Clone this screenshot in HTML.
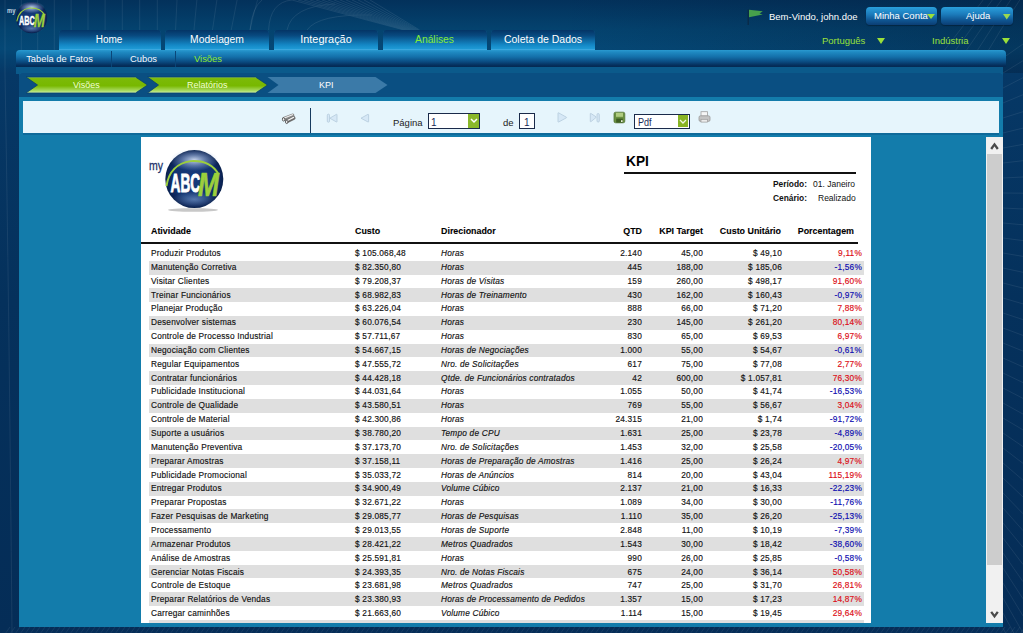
<!DOCTYPE html>
<html><head><meta charset="utf-8">
<style>
*{margin:0;padding:0;box-sizing:border-box}
html,body{width:1023px;height:633px;overflow:hidden}
body{position:relative;font-family:"Liberation Sans",sans-serif;background:linear-gradient(180deg,#03315b 0px,#04436f 30px,#054876 49px,#05406e 60px,#063866 73px,#05315c 300px,#052d57 633px)}
.abs{position:absolute}
/* top tabs */
.tab{position:absolute;top:30px;height:20px;border-radius:4px 4px 0 0;background:linear-gradient(180deg,#043465 0%,#084a80 28%,#1488c6 75%,#22a0da 100%);color:#fff;font-size:10.4px;text-align:center;line-height:19px;box-shadow:inset 0 -1px 0 #3aa8e0}
.tab span{position:relative}
.tab.act{color:#84ec36}
.subnav{position:absolute;left:16px;top:50px;width:990px;height:17px;border-radius:4px 4px 0 0;background:linear-gradient(180deg,#2a9ad0 0%,#1f8ac2 12%,#1470aa 40%,#0a4a80 70%,#052f5c 90%,#042a52 100%)}
.sub{position:absolute;top:49px;height:19px;color:#f4f8ff;font-size:9.4px;line-height:19px;text-align:center}
.sep{position:absolute;top:51px;width:1px;height:16px;background:#0a4678}
/* panel */
.panel{position:absolute;left:19px;top:73px;width:984px;height:554px;background:#137cab;border-radius:3px 3px 0 0}
.panel .topband{position:absolute;left:0;top:0;width:984px;height:24px;background:#0a4f82;border-radius:3px 3px 0 0}
.toolbar{position:absolute;left:23px;top:101px;width:976px;height:32px;background:#e6f5fc;box-shadow:0 2px 0 #0f6a9a}
.page{position:absolute;left:141px;top:137px;width:730px;height:486px;background:#fff;overflow:hidden;color:#111;font-size:8.3px}
.r{position:absolute;left:8px;width:715px;height:14px}
.r.g{background:#dfdfdf}
.tx{position:absolute;left:0;width:715px;height:10px}.r span{position:absolute;top:0;white-space:nowrap;line-height:10px;letter-spacing:0.2px;-webkit-text-stroke:0.15px}
.c1{left:2px}.c2{left:206px}.c3{left:292px;font-style:italic}
.c4{right:222px}.c5{right:161px}.c6{right:82px}.c7{right:2px}
.pos{color:#dc0c14}.neg{color:#0c0cb0}
.h{position:absolute;top:88.5px;font-weight:bold;font-size:8.9px;line-height:10px;white-space:nowrap;color:#000;-webkit-text-stroke:0.1px}
.sb{position:absolute;left:986px;top:137px;width:17px;height:486px;background:#f1f1f1}
.txt{position:absolute;white-space:nowrap}
</style></head><body>

<div class="abs" style="left:0;top:0;width:1023px;height:73px;background:linear-gradient(90deg,rgba(3,30,60,0) 0%,rgba(3,30,60,0) 55%,rgba(3,30,60,0.4) 100%)"></div>
<!-- decorative header lines -->
<svg class="abs" style="left:0;top:0" width="1023" height="633">
  <g stroke="#ffffff" stroke-width="0.8" fill="none" opacity="0.09">
    <path d="M5.0 0 Q5.0 35 5.0 73"/>
    <path d="M21.3 0 Q21.3 35 21.3 73"/>
    <path d="M37.7 0 Q37.7 35 37.7 73"/>
    <path d="M54.3 0 Q54.3 35 54.3 73"/>
    <path d="M71.1 0 Q71.1 35 71.1 73"/>
    <path d="M88.0 0 Q88.0 35 88.0 73"/>
    <path d="M105.1 0 Q105.1 35 105.1 73"/>
    <path d="M122.3 0 Q122.3 35 122.3 73"/>
    <path d="M139.7 0 Q139.7 35 139.7 73"/>
    <path d="M157.3 0 Q157.3 35 157.3 73"/>
    <path d="M177.0 0 Q175.0 35 174.0 73"/>
    <path d="M196.9 0 Q192.9 35 190.9 73"/>
    <path d="M216.9 0 Q210.9 35 207.9 73"/>
    <path d="M237.1 0 Q229.1 35 225.1 73"/>
    <path d="M257.5 0 Q247.5 35 242.5 73"/>
    <path d="M5 73 Q9 300 12 633"/>
    <path d="M10 627 L5 634"/>
    <path d="M15 627 L10 634"/>
    <path d="M20 627 L15 634"/>
    <path d="M25 627 L20 634"/>
    <path d="M30 627 L25 634"/>
    <path d="M35 627 L30 634"/>
    <path d="M40 627 L35 634"/>
    <path d="M45 627 L40 634"/>
    <path d="M50 627 L45 634"/>
    <path d="M55 627 L50 634"/>
    <path d="M60 627 L55 634"/>
    <path d="M65 627 L60 634"/>
    <path d="M70 627 L65 634"/>
    <path d="M75 627 L70 634"/>
    <path d="M80 627 L75 634"/>
    <path d="M85 627 L80 634"/>
    <path d="M90 627 L85 634"/>
    <path d="M95 627 L90 634"/>
    <path d="M100 627 L95 634"/>
    <path d="M105 627 L100 634"/>
    <path d="M110 627 L105 634"/>
    <path d="M115 627 L110 634"/>
    <path d="M120 627 L115 634"/>
    <path d="M125 627 L120 634"/>
    <path d="M130 627 L125 634"/>
    <path d="M135 627 L130 634"/>
    <path d="M140 627 L135 634"/>
    <path d="M145 627 L140 634"/>
    <path d="M150 627 L145 634"/>
    <path d="M155 627 L150 634"/>
    <path d="M160 627 L155 634"/>
    <path d="M165 627 L160 634"/>
    <path d="M170 627 L165 634"/>
    <path d="M175 627 L170 634"/>
    <path d="M180 627 L175 634"/>
    <path d="M185 627 L180 634"/>
    <path d="M190 627 L185 634"/>
    <path d="M195 627 L190 634"/>
    <path d="M200 627 L195 634"/>
    <path d="M205 627 L200 634"/>
    <path d="M210 627 L205 634"/>
    <path d="M215 627 L210 634"/>
    <path d="M220 627 L215 634"/>
    <path d="M225 627 L220 634"/>
    <path d="M230 627 L225 634"/>
    <path d="M235 627 L230 634"/>
    <path d="M240 627 L235 634"/>
    <path d="M245 627 L240 634"/>
    <path d="M250 627 L245 634"/>
    <path d="M255 627 L250 634"/>
    <path d="M260 627 L255 634"/>
    <path d="M265 627 L260 634"/>
    <path d="M270 627 L265 634"/>
    <path d="M275 627 L270 634"/>
    <path d="M280 627 L275 634"/>
    <path d="M285 627 L280 634"/>
    <path d="M290 627 L285 634"/>
    <path d="M295 627 L290 634"/>
    <path d="M300 627 L295 634"/>
    <path d="M305 627 L300 634"/>
    <path d="M310 627 L305 634"/>
    <path d="M315 627 L310 634"/>
    <path d="M320 627 L315 634"/>
    <path d="M325 627 L320 634"/>
    <path d="M330 627 L325 634"/>
    <path d="M335 627 L330 634"/>
    <path d="M340 627 L335 634"/>
    <path d="M345 627 L340 634"/>
    <path d="M350 627 L345 634"/>
    <path d="M355 627 L350 634"/>
    <path d="M360 627 L355 634"/>
    <path d="M365 627 L360 634"/>
    <path d="M370 627 L365 634"/>
    <path d="M375 627 L370 634"/>
    <path d="M380 627 L375 634"/>
    <path d="M385 627 L380 634"/>
    <path d="M390 627 L385 634"/>
    <path d="M395 627 L390 634"/>
    <path d="M400 627 L395 634"/>
    <path d="M405 627 L400 634"/>
    <path d="M410 627 L405 634"/>
    <path d="M415 627 L410 634"/>
    <path d="M420 627 L415 634"/>
    <path d="M425 627 L420 634"/>
    <path d="M430 627 L425 634"/>
    <path d="M435 627 L430 634"/>
    <path d="M440 627 L435 634"/>
    <path d="M445 627 L440 634"/>
    <path d="M450 627 L445 634"/>
    <path d="M455 627 L450 634"/>
    <path d="M460 627 L455 634"/>
    <path d="M465 627 L460 634"/>
    <path d="M470 627 L465 634"/>
    <path d="M475 627 L470 634"/>
    <path d="M480 627 L475 634"/>
    <path d="M485 627 L480 634"/>
    <path d="M490 627 L485 634"/>
    <path d="M495 627 L490 634"/>
    <path d="M500 627 L495 634"/>
    <path d="M505 627 L500 634"/>
    <path d="M510 627 L505 634"/>
    <path d="M515 627 L510 634"/>
    <path d="M520 627 L515 634"/>
    <path d="M525 627 L520 634"/>
    <path d="M530 627 L525 634"/>
    <path d="M535 627 L530 634"/>
    <path d="M540 627 L535 634"/>
    <path d="M545 627 L540 634"/>
    <path d="M550 627 L545 634"/>
    <path d="M555 627 L550 634"/>
    <path d="M560 627 L555 634"/>
    <path d="M565 627 L560 634"/>
    <path d="M570 627 L565 634"/>
    <path d="M575 627 L570 634"/>
    <path d="M580 627 L575 634"/>
    <path d="M585 627 L580 634"/>
    <path d="M590 627 L585 634"/>
    <path d="M595 627 L590 634"/>
    <path d="M600 627 L595 634"/>
    <path d="M605 627 L600 634"/>
    <path d="M610 627 L605 634"/>
    <path d="M615 627 L610 634"/>
    <path d="M620 627 L615 634"/>
    <path d="M625 627 L620 634"/>
    <path d="M630 627 L625 634"/>
    <path d="M635 627 L630 634"/>
    <path d="M640 627 L635 634"/>
    <path d="M645 627 L640 634"/>
    <path d="M650 627 L645 634"/>
    <path d="M655 627 L650 634"/>
    <path d="M660 627 L655 634"/>
    <path d="M665 627 L660 634"/>
    <path d="M670 627 L665 634"/>
    <path d="M675 627 L670 634"/>
    <path d="M680 627 L675 634"/>
    <path d="M685 627 L680 634"/>
    <path d="M690 627 L685 634"/>
    <path d="M695 627 L690 634"/>
    <path d="M700 627 L695 634"/>
    <path d="M705 627 L700 634"/>
    <path d="M710 627 L705 634"/>
    <path d="M715 627 L710 634"/>
    <path d="M720 627 L715 634"/>
    <path d="M725 627 L720 634"/>
    <path d="M730 627 L725 634"/>
    <path d="M735 627 L730 634"/>
    <path d="M740 627 L735 634"/>
    <path d="M745 627 L740 634"/>
    <path d="M750 627 L745 634"/>
    <path d="M755 627 L750 634"/>
    <path d="M760 627 L755 634"/>
    <path d="M765 627 L760 634"/>
    <path d="M770 627 L765 634"/>
    <path d="M775 627 L770 634"/>
    <path d="M780 627 L775 634"/>
    <path d="M785 627 L780 634"/>
    <path d="M790 627 L785 634"/>
    <path d="M795 627 L790 634"/>
    <path d="M800 627 L795 634"/>
    <path d="M805 627 L800 634"/>
    <path d="M810 627 L805 634"/>
    <path d="M815 627 L810 634"/>
    <path d="M820 627 L815 634"/>
    <path d="M825 627 L820 634"/>
    <path d="M830 627 L825 634"/>
    <path d="M835 627 L830 634"/>
    <path d="M840 627 L835 634"/>
    <path d="M845 627 L840 634"/>
    <path d="M850 627 L845 634"/>
    <path d="M855 627 L850 634"/>
    <path d="M860 627 L855 634"/>
    <path d="M865 627 L860 634"/>
    <path d="M870 627 L865 634"/>
    <path d="M875 627 L870 634"/>
    <path d="M880 627 L875 634"/>
    <path d="M885 627 L880 634"/>
    <path d="M890 627 L885 634"/>
    <path d="M895 627 L890 634"/>
    <path d="M900 627 L895 634"/>
    <path d="M905 627 L900 634"/>
    <path d="M910 627 L905 634"/>
    <path d="M915 627 L910 634"/>
    <path d="M920 627 L915 634"/>
    <path d="M925 627 L920 634"/>
    <path d="M930 627 L925 634"/>
    <path d="M935 627 L930 634"/>
    <path d="M940 627 L935 634"/>
    <path d="M945 627 L940 634"/>
    <path d="M950 627 L945 634"/>
    <path d="M955 627 L950 634"/>
    <path d="M960 627 L955 634"/>
    <path d="M965 627 L960 634"/>
    <path d="M970 627 L965 634"/>
    <path d="M975 627 L970 634"/>
    <path d="M980 627 L975 634"/>
    <path d="M985 627 L980 634"/>
    <path d="M990 627 L985 634"/>
    <path d="M995 627 L990 634"/>
    <path d="M1000 627 L995 634"/>
    <path d="M1005 627 L1000 634"/>
    <path d="M1010 627 L1005 634"/>
    <path d="M1015 627 L1010 634"/>
    <path d="M1020 627 L1015 634"/>
    <path d="M1025 627 L1020 634"/>
  </g>
  <g stroke="#ffffff" stroke-width="0.7" fill="none" opacity="0.12">
    <path d="M292 0 L404.0 30"/>
    <path d="M298 0 L405.2 30"/>
    <path d="M304 0 L406.4 30"/>
    <path d="M310 0 L407.6 30"/>
    <path d="M316 0 L408.8 30"/>
    <path d="M322 0 L410.0 30"/>
    <path d="M328 0 L411.2 30"/>
    <path d="M334 0 L412.4 30"/>
    <path d="M340 0 L413.6 30"/>
    <path d="M346 0 L414.8 30"/>
    <path d="M352 0 L416.0 30"/>
    <path d="M358 0 L417.2 30"/>
    <path d="M364 0 L418.4 30"/>
    <path d="M370 0 L419.6 30"/>
    <path d="M268.6 30 Q270 2 292 0"/>
    <path d="M287 30 Q292 6 335 4"/>
    <path d="M307 30 Q318 14 372 15"/>
    <path d="M250 30 Q252 8 262 0"/>
    <path d="M250 68 L251 73"/>
    <path d="M266 68 L267 73"/>
    <path d="M282 68 L283 73"/>
    <path d="M298 68 L299 73"/>
    <path d="M314 68 L315 73"/>
    <path d="M330 68 L331 73"/>
    <path d="M346 68 L347 73"/>
    <path d="M362 68 L363 73"/>
    <path d="M378 68 L379 73"/>
    <path d="M394 68 L395 73"/>
    <path d="M410 68 L411 73"/>
    <path d="M426 68 L427 73"/>
    <path d="M442 68 L443 73"/>
    <path d="M458 68 L459 73"/>
  </g>
  <g stroke="#ffffff" stroke-width="0.8" fill="none" opacity="0.09">
    <path d="M1003 58 L1023 44.0"/>
    <path d="M1003 73 L1023 60.7"/>
    <path d="M1003 88 L1023 77.7"/>
    <path d="M1003 103 L1023 94.7"/>
    <path d="M1003 118 L1023 111.7"/>
    <path d="M1003 133 L1023 128.1"/>
    <path d="M1003 148 L1023 144.4"/>
    <path d="M1003 163 L1023 160.7"/>
    <path d="M1003 178 L1023 177.0"/>
    <path d="M1003 193 L1023 193.2"/>
    <path d="M1003 208 L1023 209.0"/>
    <path d="M1003 223 L1023 224.8"/>
    <path d="M1003 238 L1023 240.6"/>
    <path d="M1003 253 L1023 256.4"/>
    <path d="M1003 268 L1023 272.3"/>
    <path d="M1003 283 L1023 288.1"/>
    <path d="M1003 298 L1023 303.9"/>
    <path d="M1003 313 L1023 319.6"/>
    <path d="M1003 328 L1023 335.4"/>
    <path d="M1003 343 L1023 351.1"/>
    <path d="M1003 358 L1023 366.9"/>
    <path d="M1003 373 L1023 382.6"/>
    <path d="M1003 388 L1023 398.4"/>
    <path d="M1003 403 L1023 414.1"/>
    <path d="M1003 418 L1023 429.9"/>
    <path d="M1003 433 L1023 446.6"/>
    <path d="M1003 448 L1023 463.4"/>
    <path d="M1003 463 L1023 480.2"/>
    <path d="M1003 478 L1023 497.0"/>
    <path d="M1003 493 L1023 513.8"/>
    <path d="M1003 508 L1023 530.6"/>
    <path d="M1003 523 L1023 547.4"/>
    <path d="M1003 538 L1023 564.5"/>
    <path d="M1003 553 L1023 581.7"/>
    <path d="M1003 568 L1023 598.8"/>
    <path d="M1003 583 L1023 615.9"/>
    <path d="M1003 598 L1023 633.0"/>
    <path d="M1003 613 L1023 650.2"/>
    <path d="M1003 628 L1023 667.3"/>
    <path d="M1023 -5 Q1000 30 975 73"/>
    <path d="M1014 -5 Q990 30 963 73"/>
    <path d="M1005 -5 Q980 30 951 73"/>
    <path d="M996 -5 Q970 30 939 73"/>
    <path d="M987 -5 Q960 30 927 73"/>
  </g>
</svg>

<!-- logo -->
<svg class="abs" style="left:0;top:0;width:0;height:0">
  <defs>
    <radialGradient id="gb" cx="0.5" cy="0.5" r="0.5">
      <stop offset="0" stop-color="#163a7c"/><stop offset="0.7" stop-color="#12346f"/><stop offset="0.92" stop-color="#0b2458"/><stop offset="1" stop-color="#08204c"/>
    </radialGradient>
    <radialGradient id="ghl" cx="0.5" cy="0.5" r="0.5">
      <stop offset="0" stop-color="#e8f0ff" stop-opacity="0.85"/><stop offset="0.5" stop-color="#b0c4e8" stop-opacity="0.45"/><stop offset="1" stop-color="#a0b8e0" stop-opacity="0"/>
    </radialGradient>
    <radialGradient id="gbl" cx="0.5" cy="0.5" r="0.5">
      <stop offset="0" stop-color="#8cacdc" stop-opacity="0.55"/><stop offset="1" stop-color="#8cacdc" stop-opacity="0"/>
    </radialGradient>
    <g id="logo">
      <circle cx="50" cy="50" r="50" fill="url(#gb)"/>
      <ellipse cx="50" cy="17" rx="42" ry="19" fill="url(#ghl)"/>
      <ellipse cx="50" cy="85" rx="38" ry="14" fill="url(#gbl)"/>
      <path d="M2 62 Q8 24 44 19 Q78 17 92 42" stroke="#9ccf3c" stroke-width="3.4" fill="none"/>
      <text x="9" y="73" font-family="Liberation Sans" font-size="43.5" font-weight="bold" fill="#fff" stroke="#fff" stroke-width="1.6" textLength="51" lengthAdjust="spacingAndGlyphs">ABC</text>
      <text x="56.5" y="79" font-family="Liberation Sans" font-size="57" font-weight="bold" font-style="italic" fill="#9ccf3c" stroke="#9ccf3c" stroke-width="1.2" textLength="36" lengthAdjust="spacingAndGlyphs">M</text>
    </g>
  </defs>
</svg>
<svg class="abs" style="left:0;top:0" width="60" height="40">
  <g transform="translate(16.2,2.2) scale(0.31)"><use href="#logo"/></g>
  <text x="7" y="12.5" font-family="Liberation Sans" font-size="7.2" font-weight="bold" fill="#c4d4e4" textLength="8.5" lengthAdjust="spacingAndGlyphs">my</text>
</svg>

<!-- top right -->
<svg class="abs" style="left:744px;top:6px" width="22" height="22">
  <path d="M4.2 3.5 L4.2 19" stroke="#0a2a48" stroke-width="1.4"/>
  <path d="M5 3.8 L18.8 5.3 L15.5 7.4 L18.8 8.6 L5 11.2 Z" fill="#47a04c"/>
</svg>
<div class="txt" style="left:769px;top:11px;font-size:9.5px;color:#fff;line-height:12px">Bem-Vindo, john.doe</div>
<div class="abs" style="left:866px;top:7px;width:71px;height:18px;border-radius:4px;background:linear-gradient(180deg,#2aa0dc 0%,#1c7cbc 40%,#0f5490 75%,#0b3e74 100%);box-shadow:0 1px 1px rgba(0,0,0,0.3)"></div>
<div class="txt" style="left:874px;top:10px;font-size:9.5px;color:#fff;line-height:12px">Minha Conta</div>
<svg class="abs" style="left:927px;top:14px" width="9" height="6"><path d="M0 0 L8 0 L4 5 Z" fill="#9ae03a"/></svg>
<div class="abs" style="left:941px;top:7px;width:72px;height:18px;border-radius:4px;background:linear-gradient(180deg,#2aa0dc 0%,#1c7cbc 40%,#0f5490 75%,#0b3e74 100%);box-shadow:0 1px 1px rgba(0,0,0,0.3)"></div>
<div class="txt" style="left:966px;top:10px;font-size:9.5px;color:#fff;line-height:12px">Ajuda</div>
<svg class="abs" style="left:1003px;top:14px" width="9" height="6"><path d="M0 0 L7.5 0 L3.75 5.5 Z" fill="#9cd850"/></svg>
<div class="txt" style="left:822px;top:35px;font-size:9.5px;color:#9ae03a;line-height:12px">Português</div>
<svg class="abs" style="left:877px;top:38px" width="9" height="7"><path d="M0 0 L8 0 L4 6 Z" fill="#9ae03a"/></svg>
<div class="txt" style="left:932px;top:35px;font-size:9.5px;color:#9ae03a;line-height:12px">Indústria</div>
<svg class="abs" style="left:1002px;top:38px" width="9" height="7"><path d="M0 0 L8 0 L4 6 Z" fill="#9ae03a"/></svg>

<!-- tabs -->
<div class="tab" style="left:59px;width:102px"><span style="font-size:10px;left:-1px">Home</span></div>
<div class="tab" style="left:165px;width:104px"><span style="font-size:10.3px">Modelagem</span></div>
<div class="tab" style="left:274px;width:104px"><span style="font-size:10.9px">Integração</span></div>
<div class="tab act" style="left:383px;width:104px"><span style="font-size:10.3px;left:-0.5px">Análises</span></div>
<div class="tab" style="left:491px;width:104px"><span style="font-size:10.5px">Coleta de Dados</span></div>

<div class="abs" style="left:16px;top:66px;width:987px;height:8px;background:#0b5a8b"></div>
<div class="subnav"></div>
<div class="sep" style="left:111px"></div>
<div class="sep" style="left:175px"></div>
<div class="sub" style="left:12px;width:95px">Tabela de Fatos</div>
<div class="sub" style="left:112px;width:63px">Cubos</div>
<div class="sub" style="left:176px;width:64px;color:#90e830">Visões</div>

<!-- panel -->
<div class="panel"><div class="topband"></div></div>

<!-- breadcrumbs -->
<svg class="abs" style="left:0;top:0" width="400" height="100">
  <defs>
    <linearGradient id="gg" x1="0" y1="0" x2="0" y2="1">
      <stop offset="0" stop-color="#a0d850"/><stop offset="0.1" stop-color="#7cba08"/><stop offset="0.55" stop-color="#78b800"/><stop offset="0.85" stop-color="#a8da60"/><stop offset="1" stop-color="#d0f4a8"/>
    </linearGradient>
  </defs>
  <path d="M26 77 L135.5 77 L147.5 85 L135.5 93 L26 93 L37.5 85 Z" fill="url(#gg)" stroke="#08406e" stroke-width="0.8"/>
  <path d="M147.5 77 L255.5 77 L267.5 85 L255.5 93 L147.5 93 L158.5 85 Z" fill="url(#gg)" stroke="#08406e" stroke-width="0.8"/>
  <path d="M267.5 77 L375.5 77 L387.5 85 L375.5 93 L267.5 93 L278.5 85 Z" fill="#3b7aa8"/>
</svg>
<div class="txt" style="left:73px;top:79px;font-size:9px;color:#f0ffd0;line-height:12px">Visões</div>
<div class="txt" style="left:187px;top:79px;font-size:9px;color:#f0ffd0;line-height:12px">Relatórios</div>
<div class="txt" style="left:319px;top:79px;font-size:9px;color:#fff;line-height:12px">KPI</div>

<!-- toolbar -->
<div class="toolbar"></div>
<div class="abs" style="left:310px;top:108px;width:1px;height:25px;background:#163a5e"></div>
<svg class="abs" style="left:278px;top:108px" width="22" height="20">
  <line x1="6" y1="10.8" x2="14.5" y2="7.4" stroke="#8a8a8a" stroke-width="3.8" stroke-linecap="round"/>
  <line x1="6.3" y1="10.0" x2="14.5" y2="6.7" stroke="#f0f0f0" stroke-width="1.2" stroke-linecap="round"/>
  <line x1="9" y1="13.2" x2="15.6" y2="10" stroke="#6e6e6e" stroke-width="3.8" stroke-linecap="round"/>
  <line x1="9.5" y1="12.5" x2="15.6" y2="9.4" stroke="#f4f4f4" stroke-width="1.2" stroke-linecap="round"/>
  <ellipse cx="5.6" cy="11.4" rx="1.2" ry="1.7" fill="#f4f4f4" stroke="#333" stroke-width="0.7"/>
  <ellipse cx="8.7" cy="13.9" rx="1.2" ry="1.7" fill="#f4f4f4" stroke="#333" stroke-width="0.7"/>
</svg>
<svg class="abs" style="left:320px;top:108px" width="54" height="20">
  <rect x="7.3" y="6.2" width="2.2" height="8" rx="1" fill="#d6e8f6" stroke="#b4cadc" stroke-width="0.8"/>
  <path d="M9.8 10.2 L16.5 6.3 Q17 6.2 17 6.8 L17 13.6 Q17 14.2 16.5 14 Z" fill="#d6e8f6" stroke="#b4cadc" stroke-width="0.8" stroke-linejoin="round"/>
  <path d="M41 10.2 L48 6.3 Q48.6 6.2 48.6 6.8 L48.6 13.6 Q48.6 14.2 48 14 Z" fill="#d6e8f6" stroke="#b4cadc" stroke-width="0.8" stroke-linejoin="round"/>
</svg>
<div class="txt" style="left:393px;top:117px;font-size:9.5px;color:#222;line-height:12px">Página</div>
<div class="abs" style="left:428px;top:113px;width:52px;height:16px;background:#fff;border:1px solid #1a2a4a"></div>
<div class="txt" style="left:431px;top:117px;font-size:10px;color:#1a2a5a;line-height:12px">1</div>
<div class="abs" style="left:468px;top:114px;width:11px;height:14px;background:#8ab82a"></div>
<svg class="abs" style="left:470px;top:118px" width="8" height="6"><path d="M1 1 L4 4 L7 1" stroke="#fff" stroke-width="1.5" fill="none"/></svg>
<div class="txt" style="left:503px;top:117px;font-size:9.5px;color:#222;line-height:12px">de</div>
<div class="abs" style="left:519px;top:113px;width:16px;height:16px;background:#fff;border:1px solid #1a2a4a"></div>
<div class="txt" style="left:524px;top:117px;font-size:10px;color:#1a2a5a;line-height:12px">1</div>
<svg class="abs" style="left:550px;top:106px" width="80" height="22">
  <path d="M16.6 16 L8 11.7 L8 7 Q8 6.4 8.6 6.7 L16.6 11.2 Z" fill="none"/>
  <path d="M8 7.2 Q8 6.5 8.7 6.9 L16.4 11.2 Q16.8 11.5 16.4 11.8 L8.7 16 Q8 16.3 8 15.6 Z" fill="#d6e8f6" stroke="#b4cadc" stroke-width="0.8"/>
  <path d="M40.3 7.8 Q40.3 7.1 41 7.5 L46 10.8 Q46.4 11.2 46 11.5 L41 15.6 Q40.3 16 40.3 15.3 Z" fill="#d6e8f6" stroke="#b4cadc" stroke-width="0.8"/>
  <rect x="47" y="7.6" width="2.3" height="8.4" rx="1" fill="#d6e8f6" stroke="#b4cadc" stroke-width="0.8"/>
  <rect x="64" y="6.2" width="10.8" height="10.6" rx="1.6" fill="#6a9040" stroke="#56763a" stroke-width="0.8"/>
  <rect x="66" y="6.8" width="7" height="4" fill="#b0cc80"/>
  <rect x="66.2" y="12.6" width="6.6" height="4" fill="#3e5e22"/>
  <rect x="71" y="14.2" width="1.6" height="1.8" fill="#e8f0d8"/>
</svg>
<div class="abs" style="left:634px;top:114px;width:56px;height:15px;background:#fff;border:1px solid #1a2a4a"></div>
<div class="txt" style="left:638px;top:117px;font-size:10.3px;color:#1a2a5a;line-height:12px;transform:scaleX(0.88);transform-origin:0 0">Pdf</div>
<div class="abs" style="left:678px;top:115px;width:10px;height:12px;background:#88b424"></div>
<svg class="abs" style="left:679px;top:119px" width="8" height="6"><path d="M1 1 L4 4 L7 1" stroke="#f0f8e0" stroke-width="1.3" fill="none"/></svg>
<svg class="abs" style="left:698px;top:110px" width="14" height="14">
  <rect x="3" y="1.7" width="6.5" height="4.5" fill="#f6f6f6" stroke="#a0a0a0" stroke-width="0.8"/>
  <rect x="1" y="5.8" width="11" height="5.6" rx="1.5" fill="#c4c4c4" stroke="#9a9a9a" stroke-width="0.8"/>
  <rect x="3" y="9.3" width="6.5" height="2.8" fill="#ececec" stroke="#9a9a9a" stroke-width="0.7"/>
</svg>

<!-- report page -->
<div class="page">
  <svg class="abs" style="left:0;top:0" width="95" height="80">
    <ellipse cx="52" cy="73" rx="25" ry="1.8" fill="#c8c8c8"/>
    <g transform="translate(24.3,13.1) scale(0.58)"><use href="#logo"/></g>
    <text x="8" y="33" font-family="Liberation Sans" font-size="13.7" fill="#24346a" stroke="#24346a" stroke-width="0.3" textLength="14" lengthAdjust="spacingAndGlyphs">my</text>
  </svg>
  <div class="txt" style="left:485px;top:16px;font-size:14px;font-weight:bold;color:#000;line-height:16px;transform:scaleX(0.98);transform-origin:0 0">KPI</div>
  <div class="abs" style="left:483px;top:35px;width:232px;height:2px;background:#111"></div>
  <div class="txt" style="left:632px;top:42px;font-size:8.4px;font-weight:bold;color:#111;line-height:10px">Período:</div>
  <div class="txt" style="left:672px;top:42px;font-size:8.5px;color:#111;line-height:10px">01. Janeiro</div>
  <div class="txt" style="left:632px;top:56px;font-size:8.4px;font-weight:bold;color:#111;line-height:10px">Cenário:</div>
  <div class="txt" style="left:677px;top:56px;font-size:8.5px;color:#111;line-height:10px">Realizado</div>

  <div class="h" style="left:10px">Atividade</div>
  <div class="h" style="left:214px">Custo</div>
  <div class="h" style="left:300px">Direcionador</div>
  <div class="h" style="right:229px">QTD</div>
  <div class="h" style="right:168px">KPI Target</div>
  <div class="h" style="right:90px">Custo Unitário</div>
  <div class="h" style="right:17px">Porcentagem</div>
  <div class="abs" style="left:0;top:105px;width:717px;height:2px;background:#111"></div>
<div class="r" style="top:110px;height:14px"><div class="tx" style="top:1.00px"><span class="c1">Produzir Produtos</span><span class="c2">$ 105.068,48</span><span class="c3">Horas</span><span class="c4">2.140</span><span class="c5">45,00</span><span class="c6">$ 49,10</span><span class="c7 pos">9,11%</span></div></div>
<div class="r g" style="top:124px;height:14px"><div class="tx" style="top:1.00px"><span class="c1">Manutenção Corretiva</span><span class="c2">$ 82.350,80</span><span class="c3">Horas</span><span class="c4">445</span><span class="c5">188,00</span><span class="c6">$ 185,06</span><span class="c7 neg">-1,56%</span></div></div>
<div class="r" style="top:138px;height:13px"><div class="tx" style="top:1.00px"><span class="c1">Visitar Clientes</span><span class="c2">$ 79.208,37</span><span class="c3">Horas de Visitas</span><span class="c4">159</span><span class="c5">260,00</span><span class="c6">$ 498,17</span><span class="c7 pos">91,60%</span></div></div>
<div class="r g" style="top:151px;height:14px"><div class="tx" style="top:2.00px"><span class="c1">Treinar Funcionários</span><span class="c2">$ 68.982,83</span><span class="c3">Horas de Treinamento</span><span class="c4">430</span><span class="c5">162,00</span><span class="c6">$ 160,43</span><span class="c7 neg">-0,97%</span></div></div>
<div class="r" style="top:165px;height:14px"><div class="tx" style="top:1.00px"><span class="c1">Planejar Produção</span><span class="c2">$ 63.226,04</span><span class="c3">Horas</span><span class="c4">888</span><span class="c5">66,00</span><span class="c6">$ 71,20</span><span class="c7 pos">7,88%</span></div></div>
<div class="r g" style="top:179px;height:14px"><div class="tx" style="top:1.00px"><span class="c1">Desenvolver sistemas</span><span class="c2">$ 60.076,54</span><span class="c3">Horas</span><span class="c4">230</span><span class="c5">145,00</span><span class="c6">$ 261,20</span><span class="c7 pos">80,14%</span></div></div>
<div class="r" style="top:193px;height:14px"><div class="tx" style="top:1.00px"><span class="c1">Controle de Processo Industrial</span><span class="c2">$ 57.711,67</span><span class="c3">Horas</span><span class="c4">830</span><span class="c5">65,00</span><span class="c6">$ 69,53</span><span class="c7 pos">6,97%</span></div></div>
<div class="r g" style="top:207px;height:13px"><div class="tx" style="top:1.00px"><span class="c1">Negociação com Clientes</span><span class="c2">$ 54.667,15</span><span class="c3">Horas de Negociações</span><span class="c4">1.000</span><span class="c5">55,00</span><span class="c6">$ 54,67</span><span class="c7 neg">-0,61%</span></div></div>
<div class="r" style="top:220px;height:14px"><div class="tx" style="top:2.00px"><span class="c1">Regular Equipamentos</span><span class="c2">$ 47.555,72</span><span class="c3">Nro. de Solicitações</span><span class="c4">617</span><span class="c5">75,00</span><span class="c6">$ 77,08</span><span class="c7 pos">2,77%</span></div></div>
<div class="r g" style="top:234px;height:14px"><div class="tx" style="top:2.00px"><span class="c1">Contratar funcionários</span><span class="c2">$ 44.428,18</span><span class="c3">Qtde. de Funcionários contratados</span><span class="c4">42</span><span class="c5">600,00</span><span class="c6">$ 1.057,81</span><span class="c7 pos">76,30%</span></div></div>
<div class="r" style="top:248px;height:14px"><div class="tx" style="top:1.00px"><span class="c1">Publicidade Institucional</span><span class="c2">$ 44.031,64</span><span class="c3">Horas</span><span class="c4">1.055</span><span class="c5">50,00</span><span class="c6">$ 41,74</span><span class="c7 neg">-16,53%</span></div></div>
<div class="r g" style="top:262px;height:14px"><div class="tx" style="top:1.00px"><span class="c1">Controle de Qualidade</span><span class="c2">$ 43.580,51</span><span class="c3">Horas</span><span class="c4">769</span><span class="c5">55,00</span><span class="c6">$ 56,67</span><span class="c7 pos">3,04%</span></div></div>
<div class="r" style="top:276px;height:14px"><div class="tx" style="top:1.00px"><span class="c1">Controle de Material</span><span class="c2">$ 42.300,86</span><span class="c3">Horas</span><span class="c4">24.315</span><span class="c5">21,00</span><span class="c6">$ 1,74</span><span class="c7 neg">-91,72%</span></div></div>
<div class="r g" style="top:290px;height:13px"><div class="tx" style="top:1.00px"><span class="c1">Suporte a usuários</span><span class="c2">$ 38.780,20</span><span class="c3">Tempo de CPU</span><span class="c4">1.631</span><span class="c5">25,00</span><span class="c6">$ 23,78</span><span class="c7 neg">-4,89%</span></div></div>
<div class="r" style="top:303px;height:14px"><div class="tx" style="top:2.00px"><span class="c1">Manutenção Preventiva</span><span class="c2">$ 37.173,70</span><span class="c3">Nro. de Solicitações</span><span class="c4">1.453</span><span class="c5">32,00</span><span class="c6">$ 25,58</span><span class="c7 neg">-20,05%</span></div></div>
<div class="r g" style="top:317px;height:14px"><div class="tx" style="top:2.00px"><span class="c1">Preparar Amostras</span><span class="c2">$ 37.158,11</span><span class="c3">Horas de Preparação de Amostras</span><span class="c4">1.416</span><span class="c5">25,00</span><span class="c6">$ 26,24</span><span class="c7 pos">4,97%</span></div></div>
<div class="r" style="top:331px;height:14px"><div class="tx" style="top:2.00px"><span class="c1">Publicidade Promocional</span><span class="c2">$ 35.033,72</span><span class="c3">Horas de Anúncios</span><span class="c4">814</span><span class="c5">20,00</span><span class="c6">$ 43,04</span><span class="c7 pos">115,19%</span></div></div>
<div class="r g" style="top:345px;height:14px"><div class="tx" style="top:1.00px"><span class="c1">Entregar Produtos</span><span class="c2">$ 34.900,49</span><span class="c3">Volume Cúbico</span><span class="c4">2.137</span><span class="c5">21,00</span><span class="c6">$ 16,33</span><span class="c7 neg">-22,23%</span></div></div>
<div class="r" style="top:359px;height:13px"><div class="tx" style="top:1.00px"><span class="c1">Preparar Propostas</span><span class="c2">$ 32.671,22</span><span class="c3">Horas</span><span class="c4">1.089</span><span class="c5">34,00</span><span class="c6">$ 30,00</span><span class="c7 neg">-11,76%</span></div></div>
<div class="r g" style="top:372px;height:14px"><div class="tx" style="top:2.00px"><span class="c1">Fazer Pesquisas de Marketing</span><span class="c2">$ 29.085,77</span><span class="c3">Horas de Pesquisas</span><span class="c4">1.110</span><span class="c5">35,00</span><span class="c6">$ 26,20</span><span class="c7 neg">-25,13%</span></div></div>
<div class="r" style="top:386px;height:14px"><div class="tx" style="top:2.00px"><span class="c1">Processamento</span><span class="c2">$ 29.013,55</span><span class="c3">Horas de Suporte</span><span class="c4">2.848</span><span class="c5">11,00</span><span class="c6">$ 10,19</span><span class="c7 neg">-7,39%</span></div></div>
<div class="r g" style="top:400px;height:14px"><div class="tx" style="top:2.00px"><span class="c1">Armazenar Produtos</span><span class="c2">$ 28.421,22</span><span class="c3">Metros Quadrados</span><span class="c4">1.543</span><span class="c5">30,00</span><span class="c6">$ 18,42</span><span class="c7 neg">-38,60%</span></div></div>
<div class="r" style="top:414px;height:14px"><div class="tx" style="top:2.00px"><span class="c1">Análise de Amostras</span><span class="c2">$ 25.591,81</span><span class="c3">Horas</span><span class="c4">990</span><span class="c5">26,00</span><span class="c6">$ 25,85</span><span class="c7 neg">-0,58%</span></div></div>
<div class="r g" style="top:428px;height:13px"><div class="tx" style="top:2.00px"><span class="c1">Gerenciar Notas Fiscais</span><span class="c2">$ 24.393,35</span><span class="c3">Nro. de Notas Fiscais</span><span class="c4">675</span><span class="c5">24,00</span><span class="c6">$ 36,14</span><span class="c7 pos">50,58%</span></div></div>
<div class="r" style="top:441px;height:14px"><div class="tx" style="top:2.00px"><span class="c1">Controle de Estoque</span><span class="c2">$ 23.681,98</span><span class="c3">Metros Quadrados</span><span class="c4">747</span><span class="c5">25,00</span><span class="c6">$ 31,70</span><span class="c7 pos">26,81%</span></div></div>
<div class="r g" style="top:455px;height:14px"><div class="tx" style="top:2.00px"><span class="c1">Preparar Relatórios de Vendas</span><span class="c2">$ 23.380,93</span><span class="c3">Horas de Processamento de Pedidos</span><span class="c4">1.357</span><span class="c5">15,00</span><span class="c6">$ 17,23</span><span class="c7 pos">14,87%</span></div></div>
<div class="r" style="top:469px;height:14px"><div class="tx" style="top:2.00px"><span class="c1">Carregar caminhões</span><span class="c2">$ 21.663,60</span><span class="c3">Volume Cúbico</span><span class="c4">1.114</span><span class="c5">15,00</span><span class="c6">$ 19,45</span><span class="c7 pos">29,64%</span></div></div>
<div class="r g" style="top:483px"></div>
</div>

<!-- scrollbar -->
<div class="sb">
  <div class="abs" style="left:1px;top:17px;width:15px;height:411px;background:#cdcdcd"></div>
  <svg class="abs" style="left:3px;top:5px" width="11" height="10"><path d="M2.2 7.0 L5.5 2.4 L8.8 7.0" stroke="#4a4a4a" stroke-width="2.3" fill="none"/></svg>
  <svg class="abs" style="left:3px;top:473px" width="11" height="10"><path d="M2.2 1.8 L5.5 6.4 L8.8 1.8" stroke="#4a4a4a" stroke-width="2.3" fill="none"/></svg>
</div>
</body></html>
